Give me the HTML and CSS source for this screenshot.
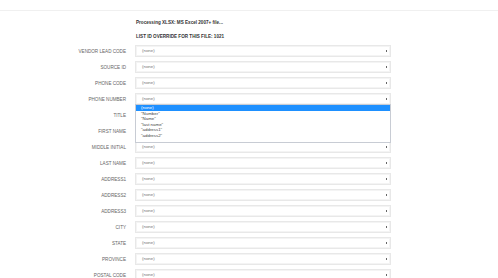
FILE: index.html
```html
<!DOCTYPE html>
<html lang="en">
<head>
    <meta charset="UTF-8" />
    <title>Lead file mapping</title>
    <link rel="stylesheet" href="styles.css">
</head>
<body>
    <div class="topbar"></div>
    <div class="mapping">
        <p class="note">Processing XLSX: MS Excel 2007+ file...</p>
        <p class="note">LIST ID OVERRIDE FOR THIS FILE: 1021</p>

        <label>VENDOR LEAD CODE</label>
        <div class="pick">(none)</div>
        <label>SOURCE ID</label>
        <div class="pick">(none)</div>
        <label>PHONE CODE</label>
        <div class="pick">(none)</div>
        <label>PHONE NUMBER</label>
        <div class="pick open">(none)
            <ul class="options">
                <li class="chosen">(none)</li>
                <li>"Number"</li>
                <li>"Name"</li>
                <li>"last name"</li>
                <li>"address1"</li>
                <li>"address2"</li>
            </ul>
        </div>
        <label>TITLE</label>
        <div class="pick covered">(none)</div>
        <label>FIRST NAME</label>
        <div class="pick covered">(none)</div>
        <label>MIDDLE INITIAL</label>
        <div class="pick">(none)</div>
        <label>LAST NAME</label>
        <div class="pick">(none)</div>
        <label>ADDRESS1</label>
        <div class="pick">(none)</div>
        <label>ADDRESS2</label>
        <div class="pick">(none)</div>
        <label>ADDRESS3</label>
        <div class="pick">(none)</div>
        <label>CITY</label>
        <div class="pick">(none)</div>
        <label>STATE</label>
        <div class="pick">(none)</div>
        <label>PROVINCE</label>
        <div class="pick">(none)</div>
        <label>POSTAL CODE</label>
        <div class="pick">(none)</div>
    </div>
</body>
</html>
```
FILE: styles.css
```css
body {
    margin: 0;
    background: #fff;
    font-family: "Liberation Sans", Arial, sans-serif;
    color: #555;
}
.topbar {
    height: 10px;
    border-bottom: 1px solid #f0f0f0;
}
.mapping {
    display: grid;
    grid-template-columns: 126px 256px;
    column-gap: 9px;
    row-gap: 4px;
    align-items: center;
    padding-top: 9px;
}
.note {
    grid-column: 2;
    margin: 0 0 0 1px;
    font-size: 4.6px;
    line-height: 6px;
    font-weight: bold;
    color: #333;
}
.note + .note {
    margin-top: 4px;
    margin-bottom: 1px;
}
label {
    text-align: right;
    font-size: 4.6px;
    color: #666;
}
.pick {
    position: relative;
    height: 12px;
    box-sizing: border-box;
    border: 1px solid #e8e8e8;
    box-shadow: inset 0 0 0 1px #f4f4f4;
    padding-left: 6px;
    font-size: 4.4px;
    line-height: 10px;
    color: #777;
}
.pick::after {
    content: "";
    position: absolute;
    right: 3px;
    top: 4px;
    width: 1.5px;
    height: 2px;
    background: #666;
}
/* these two sit under the open list */
.covered {
    color: transparent;
}
.options {
    position: absolute;
    left: -1px;
    right: -1px;
    top: 10px;
    margin: 0;
    padding: 0 0 4px;
    list-style: none;
    background: #fff;
    border: 1px solid #c8ccd4;
    z-index: 2;
}
.options li {
    padding-left: 5px;
    height: 5.5px;
    line-height: 5.5px;
    font-size: 4.4px;
    color: #444;
}
.options .chosen {
    background: #1e90ff;
    color: #fff;
}
```
